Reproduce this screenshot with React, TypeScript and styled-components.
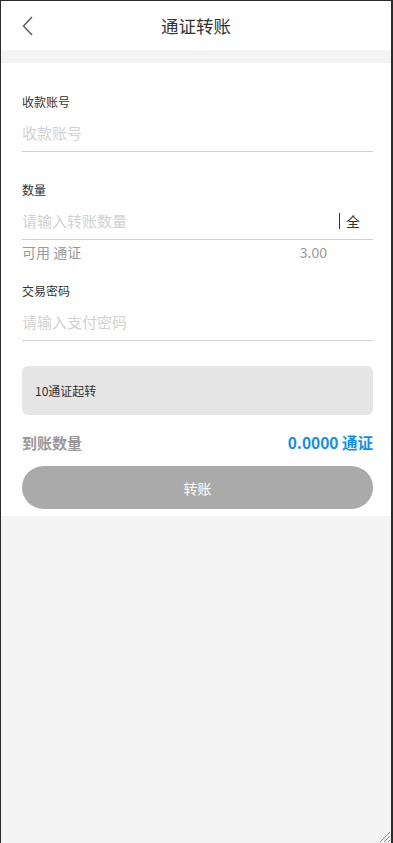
import React from "react";
import styled, { createGlobalStyle } from "styled-components";

const GlobalStyle = createGlobalStyle`
	html, body {
		margin: 0;
		padding: 0;
		background: #f4f4f4;
		font-family: "Noto Sans CJK SC", "Noto Sans", sans-serif;
	}
	* { box-sizing: border-box; }
`;

const Frame = styled.div`
	position: relative;
	min-height: 100vh;
	background: #f4f4f4;
	border-top: 1px solid #2b2b2b;
	border-left: 1px solid #2b2b2b;
	border-right: 2px solid #2b2b2b;
	display: flex;
	flex-direction: column;
`;

const Header = styled.header`
	height: 49px;
	background: #fff;
	display: flex;
	align-items: center;
	justify-content: center;
	position: relative;
`;

const BackButton = styled.button`
	position: absolute;
	left: 19px;
	top: 15px;
	background: none;
	border: none;
	padding: 0;
	width: 14px;
	height: 20px;
	display: flex;
	align-items: center;
	justify-content: center;
`;

const Title = styled.h1`
	margin: 0;
	font-size: 17.5px;
	font-weight: 400;
	color: #333;
`;

const Content = styled.main`
	margin-top: 13px;
	background: #fff;
	padding: 30px 18px 7px 21px;
	display: flex;
	flex-direction: column;
`;

const Field = styled.div<{ $gap?: number }>`
	display: flex;
	flex-direction: column;
	margin-bottom: ${(p) => p.$gap ?? 0}px;
`;

const Label = styled.label`
	font-size: 12px;
	color: #333;
	line-height: 17px;
`;

const InputRow = styled.div`
	display: flex;
	align-items: center;
	height: 38px;
	margin-top: 4px;
	border-bottom: 1px solid #cfcfcf;
`;

const Input = styled.input`
	flex: 1;
	border: none;
	outline: none;
	padding: 0;
	font-family: inherit;
	font-size: 15px;
	color: #333;
	background: transparent;
	&::placeholder {
		color: #d2d2d2;
	}
`;

const AllButton = styled.span`
	font-size: 14px;
	color: #333;
	border-left: 1px solid #333;
	padding-left: 6px;
	margin-right: 13px;
	line-height: 16px;
`;

const Balance = styled.div`
	display: flex;
	justify-content: space-between;
	font-size: 14px;
	color: #999;
	padding-right: 46px;
	line-height: 24px;
`;

const Notice = styled.div`
	margin-top: 25px;
	height: 49px;
	border-radius: 6px;
	background: #e5e5e5;
	display: flex;
	align-items: center;
	padding-left: 13px;
	font-size: 12px;
	color: #333;
`;

const ReceiveRow = styled.div`
	display: flex;
	justify-content: space-between;
	align-items: center;
	margin-top: 16px;
	height: 22px;
	font-size: 15px;
	font-weight: 700;
`;

const ReceiveLabel = styled.span`
	color: #999;
`;

const ReceiveValue = styled.span`
	color: #0f8ef5;
	font-size: 15.5px;
`;

const SubmitButton = styled.button`
	margin-top: 13px;
	height: 43px;
	border: none;
	border-radius: 22px;
	background: #aaaaaa;
	color: #fff;
	font-family: inherit;
	font-size: 14px;
`;

const ResizeGrip = styled.svg`
	position: absolute;
	right: 0;
	bottom: 0;
`;

export default function App() {
	return (
		<>
			<GlobalStyle />
			<Frame>
				<Header>
					<BackButton aria-label="返回">
						<svg width="11" height="20" viewBox="0 0 11 20" fill="none">
							<path d="M10 1L1.5 10L10 19" stroke="#555" strokeWidth="1.4" />
						</svg>
					</BackButton>
					<Title>通证转账</Title>
				</Header>
				<Content>
					<Field $gap={29}>
						<Label>收款账号</Label>
						<InputRow>
							<Input placeholder="收款账号" />
						</InputRow>
					</Field>
					<Field $gap={18}>
						<Label>数量</Label>
						<InputRow>
							<Input placeholder="请输入转账数量" />
							<AllButton>全</AllButton>
						</InputRow>
						<Balance>
							<span>可用 通证</span>
							<span>3.00</span>
						</Balance>
					</Field>
					<Field>
						<Label>交易密码</Label>
						<InputRow>
							<Input type="password" placeholder="请输入支付密码" />
						</InputRow>
					</Field>
					<Notice>10通证起转</Notice>
					<ReceiveRow>
						<ReceiveLabel>到账数量</ReceiveLabel>
						<ReceiveValue>0.0000 通证</ReceiveValue>
					</ReceiveRow>
					<SubmitButton>转账</SubmitButton>
				</Content>
				<ResizeGrip width="14" height="14" viewBox="0 0 14 14">
					<path d="M13 3L3 13M13 7L7 13M13 11L11 13" stroke="#888" strokeWidth="1" />
				</ResizeGrip>
			</Frame>
		</>
	);
}
